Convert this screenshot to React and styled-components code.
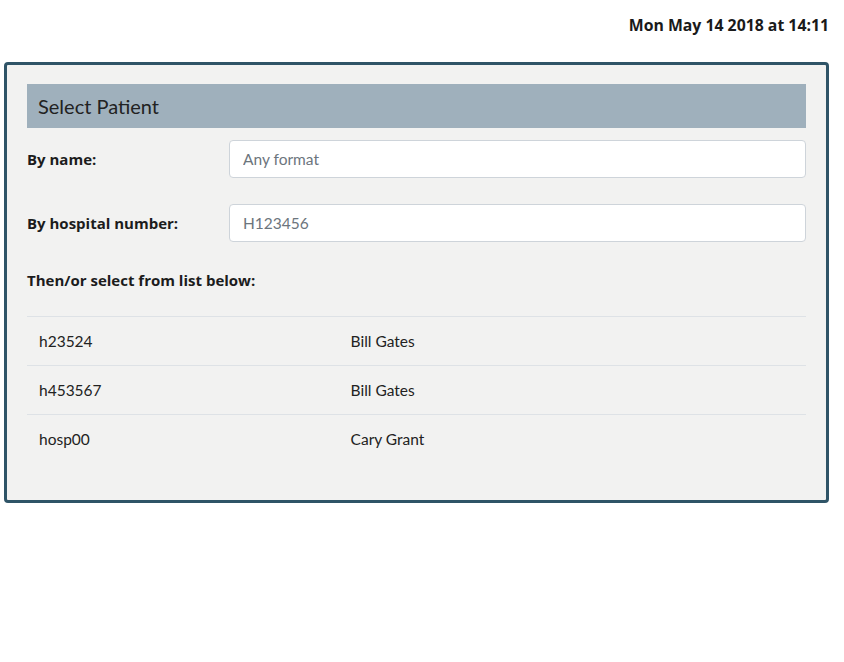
import React from 'react';
import styled, { createGlobalStyle } from 'styled-components';

const GlobalStyle = createGlobalStyle`
  body {
    margin: 0;
    padding: 0;
    background: #fff;
    font-family: Lato, "Open Sans", sans-serif;
    color: #212529;
  }
`;

const Page = styled.div`
  padding: 0 4px;
  width: 844px;
  box-sizing: border-box;
`;

const TopBar = styled.div`
  display: flex;
  justify-content: flex-end;
  padding: 14px 11px 0 0;
  height: 62px;
  box-sizing: border-box;
  font-family: "Open Sans", sans-serif;
  font-size: 15.8px;
  line-height: 22px;
  font-weight: bold;
  color: #1a1a1a;
`;

const Card = styled.div`
  width: 825px;
  box-sizing: border-box;
  border: 3px solid #2f5467;
  border-radius: 4px;
  background: #f2f2f1;
  padding: 19px 20px 37px 20px;
`;

const Header = styled.div`
  background: #9fb0bc;
  height: 44px;
  display: flex;
  align-items: center;
  padding: 0 11px;
  font-size: 20px;
  color: #222;
  margin-bottom: 12px;
`;

const FormRow = styled.div`
  display: flex;
  align-items: center;
  margin-bottom: 26px;
`;

const Label = styled.label`
  width: 202px;
  flex-shrink: 0;
  font-family: "Open Sans", sans-serif;
  font-size: 15px;
  line-height: 20px;
  font-weight: bold;
  color: #1c1c1c;
`;

const Input = styled.input`
  flex: 1;
  height: 38px;
  box-sizing: border-box;
  border: 1px solid #ced4da;
  border-radius: 4px;
  background: #fff;
  padding: 6px 13px;
  font-family: inherit;
  font-size: 15.5px;
  color: #495057;
  &::placeholder {
    color: #6c757d;
  }
`;

const ListLabel = styled.div`
  font-family: "Open Sans", sans-serif;
  font-size: 15px;
  line-height: 20px;
  font-weight: bold;
  color: #1c1c1c;
  padding-top: 2px;
  margin-bottom: 26px;
`;

const Table = styled.table`
  width: 100%;
  border-collapse: collapse;
  font-size: 15.5px;
  color: #222;
`;

const Cell = styled.td`
  border-top: 1px solid #dee2e6;
  height: 48px;
  padding: 0 12px;
  width: ${p => p.$w || 'auto'};
`;

const rows = [
  ['h23524', 'Bill Gates'],
  ['h453567', 'Bill Gates'],
  ['hosp00', 'Cary Grant'],
];

export default function App() {
  return (
    <>
      <GlobalStyle />
      <Page>
        <TopBar>Mon May 14 2018 at 14:11</TopBar>
        <Card>
          <Header>Select Patient</Header>
          <FormRow>
            <Label>By name:</Label>
            <Input placeholder="Any format" />
          </FormRow>
          <FormRow>
            <Label>By hospital number:</Label>
            <Input placeholder="H123456" />
          </FormRow>
          <ListLabel>Then/or select from list below:</ListLabel>
          <Table>
            <tbody>
              {rows.map(([num, name]) => (
                <tr key={num}>
                  <Cell $w="40%">{num}</Cell>
                  <Cell>{name}</Cell>
                </tr>
              ))}
            </tbody>
          </Table>
        </Card>
      </Page>
    </>
  );
}
